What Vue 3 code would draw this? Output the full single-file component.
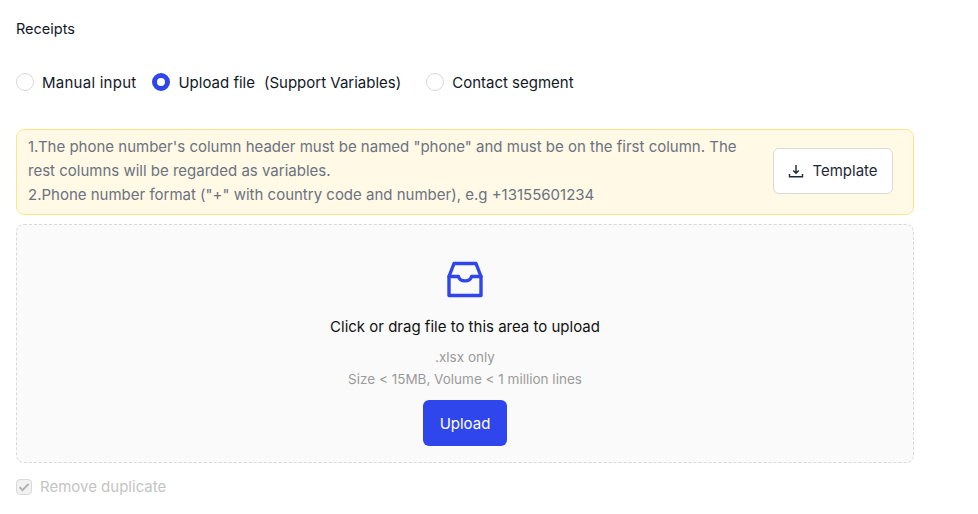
<script setup>
import { ref } from "vue";
const mode = ref("upload");
const options = [
  { key: "manual", label: "Manual input" },
  { key: "upload", label: "Upload file", note: "(Support Variables)" },
  { key: "segment", label: "Contact segment" },
];
</script>

<template>
  <div class="page">
    <div class="title">Receipts</div>
    <div class="radios">
      <label v-for="o in options" :key="o.key" class="radio" @click="mode = o.key">
        <span class="dot" :class="{ on: mode === o.key }"></span>
        <span>{{ o.label }}</span>
        <span v-if="o.note" class="note">{{ o.note }}</span>
      </label>
    </div>
    <div class="notice">
      <div class="notice-text">
        1.The phone number's column header must be named "phone" and must be on the first column. The rest columns will be regarded as variables.<br />
        2.Phone number format ("+" with country code and number), e.g +13155601234
      </div>
      <button class="template-btn">
        <svg width="16" height="16" viewBox="0 0 16 16" fill="none" stroke="#1f2937" stroke-width="1.4">
          <path d="M8 2V10M5.2 7.4L8 10.2l2.8-2.8" />
          <path d="M1.5 11v2.8h13V11" />
        </svg>
        Template
      </button>
    </div>
    <div class="dropzone">
      <svg class="inbox" width="38" height="38" viewBox="0 0 38 38" fill="none" stroke="#2f46ed" stroke-width="3.4" stroke-linejoin="round" stroke-linecap="round">
        <path d="M3 16.5L8 3.5h22l5 13v19H3z" />
        <path d="M3 16.5h9.5c.5 2.6 3 4.4 6.5 4.4s6-1.8 6.5-4.4H35" />
      </svg>
      <div class="drop-title">Click or drag file to this area to upload</div>
      <div class="hint first">.xlsx only</div>
      <div class="hint">Size &lt; 15MB, Volume &lt; 1 million lines</div>
      <button class="upload-btn">Upload</button>
    </div>
    <label class="check">
      <span class="box">
        <svg width="12" height="12" viewBox="0 0 12 12" fill="none" stroke="#b0b0b0" stroke-width="1.9">
          <path d="M1.5 6.2l3 3 6-6.2" />
        </svg>
      </span>
      Remove duplicate
    </label>
  </div>
</template>

<style>
body {
  background: #fff;
}
</style>

<style scoped>
.page {
  width: 898px;
  padding: 19px 0 0 16px;
  font-family: Inter, "Noto Sans", sans-serif;
  font-size: 15px;
  color: #111827;
}
.title {
  line-height: 20px;
  font-size: 14.5px;
}
.radios {
  display: flex;
  gap: 16px;
  margin-top: 32px;
  height: 22px;
  align-items: center;
}
.radio {
  display: flex;
  align-items: center;
  gap: 8px;
}
.radio:first-child {
  letter-spacing: 0.25px;
}
.note {
  margin: 0 9px 0 1px;
}
.dot {
  width: 18px;
  height: 18px;
  box-sizing: border-box;
  border: 1px solid #d9d9d9;
  border-radius: 50%;
  background: #fff;
}
.dot.on {
  border: 5px solid #2f46ed;
}
.notice {
  display: flex;
  align-items: center;
  justify-content: space-between;
  margin-top: 36px;
  height: 86px;
  box-sizing: border-box;
  padding: 0 20px 3px 11px;
  background: #fff9e6;
  border: 1px solid #fde68a;
  border-radius: 8px;
}
.notice-text {
  width: 720px;
  color: #6b7280;
  line-height: 24px;
}
.template-btn {
  display: flex;
  align-items: center;
  justify-content: center;
  gap: 8px;
  width: 120px;
  height: 46px;
  background: #fff;
  border: 1px solid #d9d9d9;
  border-radius: 6px;
  font: inherit;
  color: #1f2937;
}
.dropzone {
  display: flex;
  flex-direction: column;
  align-items: center;
  margin-top: 9px;
  height: 239px;
  box-sizing: border-box;
  padding-top: 35px;
  background: #fafafa;
  border: 1px dashed #d9d9d9;
  border-radius: 8px;
}
.drop-title {
  margin-top: 17px;
  line-height: 24px;
  color: #111;
}
.hint {
  font-size: 13.5px;
  line-height: 22px;
  color: #9a9a9a;
}
.hint.first {
  margin-top: 7px;
}
.upload-btn {
  margin-top: 10px;
  width: 84px;
  height: 46px;
  background: #2f46ed;
  color: #fff;
  border: none;
  border-radius: 6px;
  font: inherit;
}
.check {
  display: flex;
  align-items: center;
  gap: 8px;
  margin-top: 15px;
  line-height: 18px;
  color: #c4c4c4;
}
.box {
  display: flex;
  align-items: center;
  justify-content: center;
  width: 16px;
  height: 16px;
  box-sizing: border-box;
  background: #f2f2f2;
  border: 1px solid #d9d9d9;
  border-radius: 4px;
}
</style>
